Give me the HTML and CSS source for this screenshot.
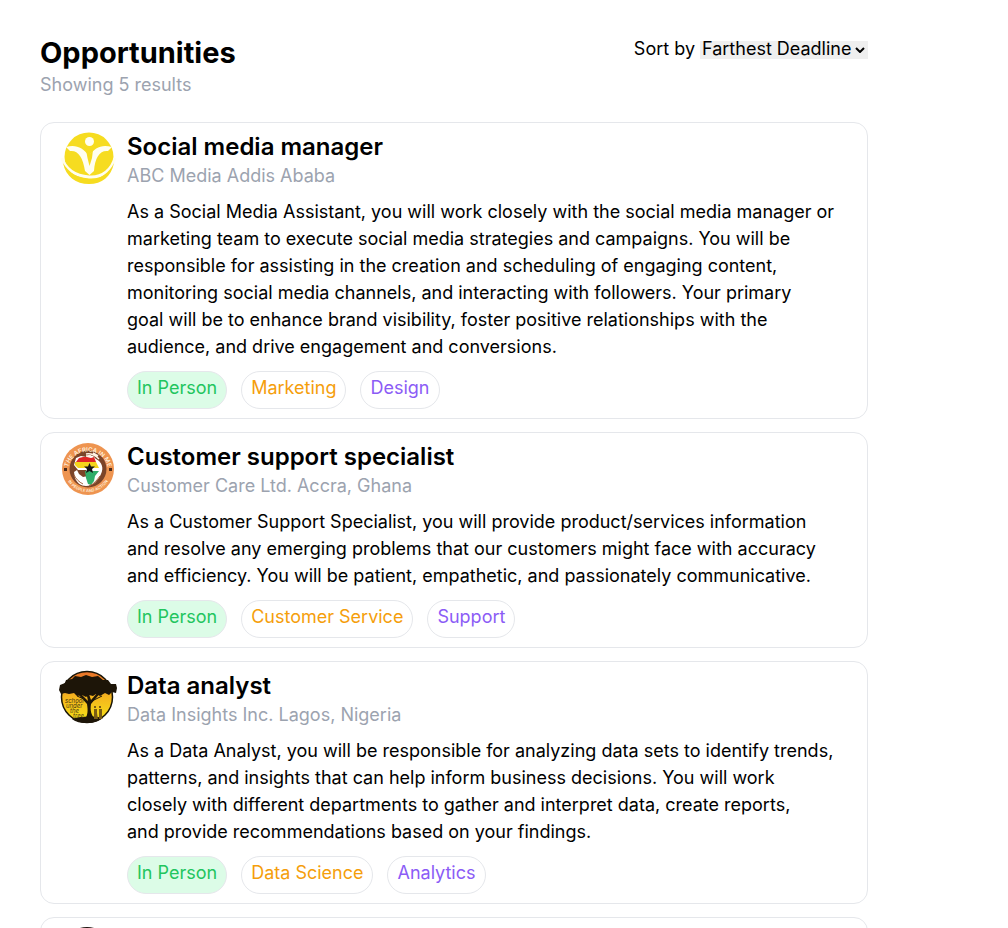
FILE: index.html
```
<!DOCTYPE html>
<html lang="en">
<head>
<meta charset="utf-8">
<title>Opportunities</title>
<link rel="stylesheet" href="styles.css">
</head>
<body>
<main class="page">
  <header class="header">
    <div>
      <h1 class="heading">Opportunities</h1>
      <p class="count">Showing 5 results</p>
    </div>
    <div class="sort">
      <label for="sort">Sort by</label>
      <div class="select-wrap">
        <select id="sort" class="sort-select"><option>Farthest Deadline</option></select>
        <svg class="chevron" viewBox="0 0 10 6" aria-hidden="true"><path d="M1 1l4 4 4-4" fill="none" stroke="#000" stroke-width="2"/></svg>
      </div>
    </div>
  </header>

  <article class="card">
    <svg class="logo" viewBox="0 0 54 54" aria-hidden="true">
      <circle cx="28" cy="25" r="24.500" fill="#f6dc20"/>
      <circle cx="28.500" cy="9.500" r="4.500" fill="#fffef0"/>
      <path d="M5 15C14 12 22 15 28 24C34 15 41 12 51 15L47 19C39 18 34 25 33 39L28.500 43L24 39C22 25 17 18 9 19Z" fill="#fffef0"/>
      <path d="M25 18l3.500 5 3.500-5-1 8-2.500 8-2-8z" fill="#f6dc20"/>
      <path d="M1 26C4 37 14 44 28 45S51 37 54 26" fill="none" stroke="#fffef0" stroke-width="3"/>
      <path d="M2 31C8 41 17 46 28 47S48 41 53 31C50 45 41 52 28 52S5 45 2 31Z" fill="#f6dc20"/>
    </svg>
    <div class="body">
      <h2 class="title">Social media manager</h2>
      <p class="org">ABC Media Addis Ababa</p>
      <p class="text">As a Social Media Assistant, you will work closely with the social media manager or marketing team to execute social media strategies and campaigns. You will be responsible for assisting in the creation and scheduling of engaging content, monitoring social media channels, and interacting with followers. Your primary goal&nbsp;will be to enhance brand visibility, foster positive relationships with the audience, and drive engagement and conversions.</p>
      <ul class="tags"><li class="tag tag-green">In Person</li><li class="tag tag-orange">Marketing</li><li class="tag tag-purple">Design</li></ul>
    </div>
  </article>

  <article class="card">
    <svg class="logo" viewBox="0 0 54 54" aria-hidden="true">
      <defs>
        <path id="arc-top" d="M6.500 30A20.500 20.500 0 1 1 47.500 30"/>
        <path id="arc-bottom" d="M3.500 31A24 24 0 0 0 50.500 31"/>
      </defs>
      <circle cx="27" cy="27" r="26" fill="#ee9450"/>
      <circle cx="27" cy="27" r="18.500" fill="#7b4428"/>
      <text class="ring-text"><textPath href="#arc-top" startOffset="50%">THE AFRICA IN ME</textPath></text>
      <text class="ring-text ring-small"><textPath href="#arc-bottom" startOffset="50%">IN PEOPLE AND ACTION</textPath></text>
      <path d="M3 26h3v3H3zM48 26h3v3h-3z" fill="#4b2b1b"/>
      <path d="M35 17c6 3 8 9 5 15-3 7-8 12-15 12-5 0-9-3-11-8l-1-6 3-2 2 4 4 3 5-1-2-6-8 0-4-5 2-7 5-2 5 1 3-2 4 1z" fill="#fff"/>
      <path d="M15 20l3-4 4-1 4 0 4 1 3-1 2 5z" fill="#df2525"/>
      <path d="M14 20h21l3 6H25l-8 0-3-3z" fill="#f4d51c"/>
      <path d="M24 29h14l-4 5-1 5-3 4-3-1-2-6z" fill="#2fae69"/>
      <path d="M28.500 21l1.500 3.500h4l-3 2.500 1 4-3.500-2-3.500 2 1-4-3-2.500h4z" fill="#151515"/>
      <path d="M25 12c5-1 9 1 13 5M25 14l5 0M32 11l5 3" fill="none" stroke="#fff3e6" stroke-width="1.500"/>
      <path d="M39 34c-3 4-6 8-11 10M13 33c2 4 5 7 9 9" fill="none" stroke="#a5633d" stroke-width="1"/>
    </svg>
    <div class="body">
      <h2 class="title">Customer support specialist</h2>
      <p class="org">Customer Care Ltd. Accra, Ghana</p>
      <p class="text">As a Customer Support Specialist, you will provide product/services information and resolve any emerging problems that our customers might face with accuracy and efficiency. You will be patient, empathetic, and passionately communicative.</p>
      <ul class="tags"><li class="tag tag-green">In Person</li><li class="tag tag-orange">Customer Service</li><li class="tag tag-purple">Support</li></ul>
    </div>
  </article>

  <article class="card">
    <svg class="logo" viewBox="0 0 54 54" aria-hidden="true">
      <defs>
        <linearGradient id="sunset" x1="0" y1="0" x2="0" y2="1"><stop offset="0" stop-color="#e8712a"/><stop offset=".5" stop-color="#f5b51e"/><stop offset="1" stop-color="#f6e516"/></linearGradient>
      </defs>
      <circle cx="26" cy="26" r="25.500" fill="url(#sunset)" stroke="#191507" stroke-width="1.500"/>
      <path d="M-1 14l5-2 1-3 6-1 3-3 6 1 5-2 6 2 6-1 5 4 5 0 3 4 5 0 1 4-1 5-4-1-3 3-4-2-5 3-4-2-3 2-4-1-3 2-4-2-5 1-3-3-5 1-4-1-4 1-2-4z" fill="#1d1508"/>
      <path d="M24 48c3-4 3-9 2-15L16 22h3l8 8-2-10h2l3 9 8-9h3L30 33c-1 6 0 11 4 15z" fill="#1d1508"/>
      <path d="M29 31l12-6M25 29l-9-4" stroke="#1d1508" stroke-width="1" fill="none"/>
      <path d="M11 48c10-3 21-3 31-1-4 3-9 5-16 5S15 51 11 48z" fill="#1d1508"/>
      <path d="M33 38h3v4l1 6h-4zM38 38h3v4l0 6h-3zM33 35h2v2h-2zM38 35h2v2h-2z" fill="#7a5c14"/>
      <text class="tree-text" x="4" y="32">school</text>
      <text class="tree-text" x="5" y="37">under</text>
      <text class="tree-text" x="9" y="42">the</text>
      <text class="tree-text" x="12" y="47">tree</text>
    </svg>
    <div class="body">
      <h2 class="title">Data analyst</h2>
      <p class="org">Data Insights Inc. Lagos, Nigeria</p>
      <p class="text">As a Data Analyst, you will be responsible for analyzing data sets to identify trends, patterns, and insights that can help inform business decisions. You will work closely with different departments to gather and interpret data, create reports, and&nbsp;provide recommendations based on your findings.</p>
      <ul class="tags"><li class="tag tag-green">In Person</li><li class="tag tag-orange">Data Science</li><li class="tag tag-purple">Analytics</li></ul>
    </div>
  </article>

  <article class="card">
    <svg class="logo" viewBox="0 0 54 54" aria-hidden="true"><circle cx="26" cy="26" r="26" fill="#1c100d"/></svg>
  </article>
</main>
</body>
</html>
```
FILE: styles.css
```
* { box-sizing: border-box; }
body {
  margin: 0;
  background: #fff;
  color: #000;
  font-family: Inter, "Liberation Sans", sans-serif;
  font-size: 18px;
  line-height: 27px;
}
h1, h2, p, ul { margin: 0; padding: 0; }
.page {
  height: 100vh;
  overflow: hidden;
  padding: 36px 140px 0 40px;
  display: flex;
  flex-direction: column;
  gap: 13px;
}
.header {
  display: flex;
  justify-content: space-between;
  align-items: flex-start;
  padding-bottom: 9px;
}
.heading { font-size: 29px; line-height: 34px; font-weight: 700; }
.count { color: #9ca3af; line-height: 30px; }
.sort { display: flex; align-items: center; gap: 5px; line-height: 25px; }
.select-wrap { position: relative; display: flex; padding-top: 2px; }
.sort-select {
  appearance: none;
  font: inherit;
  line-height: 16px;
  height: 18px;
  padding: 0 16px 2px 2px;
  border: 0;
  border-radius: 0;
  background: #efefef;
  color: #000;
}
.chevron {
  position: absolute;
  right: 3px;
  top: 8px;
  width: 10px;
  height: 6px;
  pointer-events: none;
}
.card {
  display: flex;
  flex-shrink: 0;
  gap: 12px;
  padding: 9px 9px 9px 20px;
  border: 1px solid #e5e7eb;
  border-radius: 14px;
}
.logo { flex: none; width: 54px; height: 54px; overflow: visible; }
.body { flex: 1; min-width: 0; }
.title { font-size: 24px; line-height: 30px; font-weight: 600; }
.org { color: #9ca3af; line-height: 27px; }
.text { margin-top: 9px; padding-right: 19px; }
.tags { display: flex; gap: 14px; margin-top: 11px; list-style: none; }
.tag {
  padding: 2px 9px 7px;
  border: 1px solid #e5e7eb;
  border-radius: 19px;
}
.tag-green { background: #dcfce7; color: #22c55e; }
.tag-orange { color: #f59e0b; }
.tag-purple { color: #8b5cf6; }
.ring-text { font-size: 6px; font-weight: 600; fill: #fff0dd; text-anchor: middle; }
.ring-small { font-size: 4px; }
.tree-text { font-size: 6px; font-style: italic; fill: #493711; }
```
